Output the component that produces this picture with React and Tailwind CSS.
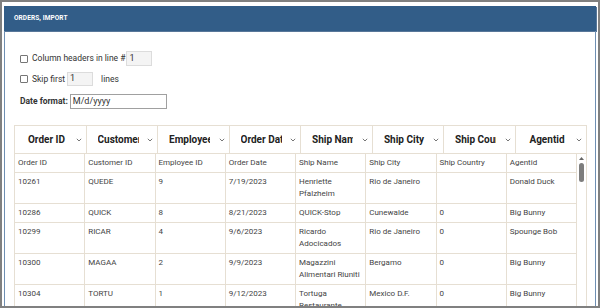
import React from 'react';

const columns = ["Order ID", "Customer ID", "Employee ID", "Order Date", "Ship Name", "Ship City", "Ship Country", "Agentid"];

const rows = [
    ["Order ID", "Customer ID", "Employee ID", "Order Date", "Ship Name", "Ship City", "Ship Country", "Agentid"],
    ["10261", "QUEDE", "9", "7/19/2023", "Henriette Pfalzheim", "Rio de Janeiro", "", "Donald Duck"],
    ["10286", "QUICK", "8", "8/21/2023", "QUICK-Stop", "Cunewalde", "0", "Big Bunny"],
    ["10299", "RICAR", "4", "9/6/2023", "Ricardo Adocicados", "Rio de Janeiro", "0", "Spounge Bob"],
    ["10300", "MAGAA", "2", "9/9/2023", "Magazzini Alimentari Riuniti", "Bergamo", "0", "Big Bunny"],
    ["10304", "TORTU", "1", "9/12/2023", "Tortuga Restaurante", "Mexico D.F.", "0", "Big Bunny"],
];

const Chevron = () => (
    <svg width="6" height="4" viewBox="0 0 6 4" className="shrink-0">
        <polyline points="0.8,0.8 3,3 5.2,0.8" fill="none" stroke="#666" strokeWidth="0.9" />
    </svg>
);

const Checkbox = () => (
    <span className="inline-block w-[8px] h-[8px] border border-[#767676] bg-white rounded-[1px] shrink-0" />
);

const App = () => {
    return (
        <div
            className="w-[600px] h-[308px] border-2 border-[#808080] bg-white overflow-hidden pl-[2px] pr-[2px] pt-[4px]"
            style={{ fontFamily: 'Roboto, "Liberation Sans", sans-serif' }}
        >
            <div className="flex flex-col h-full">
                {/* Panel header */}
                <div className="shrink-0 h-[25px] bg-[#325d88] shadow-[1px_1px_0_#587799] flex items-center pl-[10px]">
                    <span className="text-white font-bold text-[6.5px] tracking-[0.1px]">ORDERS, IMPORT</span>
                </div>

                {/* Panel body */}
                <div className="flex-1 border-l border-r border-[#6f8fb3] px-[9px] pt-[20px] text-[#333]">
                    <div className="pl-[6px] text-[8.5px]">
                        <div className="flex items-center h-[15px]">
                            <Checkbox />
                            <span className="ml-[4px]">Column headers in line #</span>
                            <span className="ml-[1px] w-[26px] h-[15px] border border-[#dcdcdc] bg-[#f4f4f4] flex items-center pl-[2px] text-[9px]">1</span>
                        </div>
                        <div className="flex items-center h-[14px] mt-[6px]">
                            <Checkbox />
                            <span className="ml-[4px]">Skip first</span>
                            <span className="ml-[2px] w-[26px] h-[14px] border border-[#dcdcdc] bg-[#f4f4f4] flex items-center pl-[2px] text-[9px]">1</span>
                            <span className="ml-[8px]">lines</span>
                        </div>
                        <div className="flex items-center h-[15px] mt-[8px]">
                            <span className="font-bold">Date format:</span>
                            <span className="ml-[2px] w-[97px] h-[15px] border border-[#a0a0a0] bg-white flex items-center pl-[2px] text-[9px]">M/d/yyyy</span>
                        </div>
                    </div>

                    {/* Grid */}
                    <div className="mt-[16px] w-[573px] border border-[#e6dfd3]">
                        <div className="flex h-[28px] border-b border-[#e6dfd3]">
                            {columns.map((col, idx) => (
                                <div key={idx} className="flex-1 min-w-0 flex items-center border-r border-[#e6dfd3] last:border-r-0 pl-[11px] pr-[4px]">
                                    <div className="w-[41px] overflow-hidden whitespace-nowrap text-center font-bold text-[10px] text-[#222]">
                                        {col}
                                    </div>
                                    <div className="ml-auto"><Chevron /></div>
                                </div>
                            ))}
                        </div>
                        <div className="flex">
                            <div className="flex-1 min-w-0">
                                {rows.map((row, r) => (
                                    <div key={r} className="grid grid-cols-8 border-b border-[#e6dfd3]">
                                        {row.map((cell, c) => (
                                            <div key={c} className="px-[3px] py-[3px] text-[8px] leading-[12px] text-[#444] border-r border-[#e6dfd3]">
                                                {cell}
                                            </div>
                                        ))}
                                    </div>
                                ))}
                            </div>
                            <div className="w-[9px] flex flex-col items-center pt-[3px]">
                                <svg width="5" height="3" viewBox="0 0 5 3">
                                    <polygon points="0,3 2.5,0 5,3" fill="#666" />
                                </svg>
                                <div className="mt-[3px] w-[5px] h-[19px] rounded-full bg-[#7d7d7d]" />
                            </div>
                        </div>
                    </div>
                </div>
            </div>
        </div>
    );
};

export default App;
